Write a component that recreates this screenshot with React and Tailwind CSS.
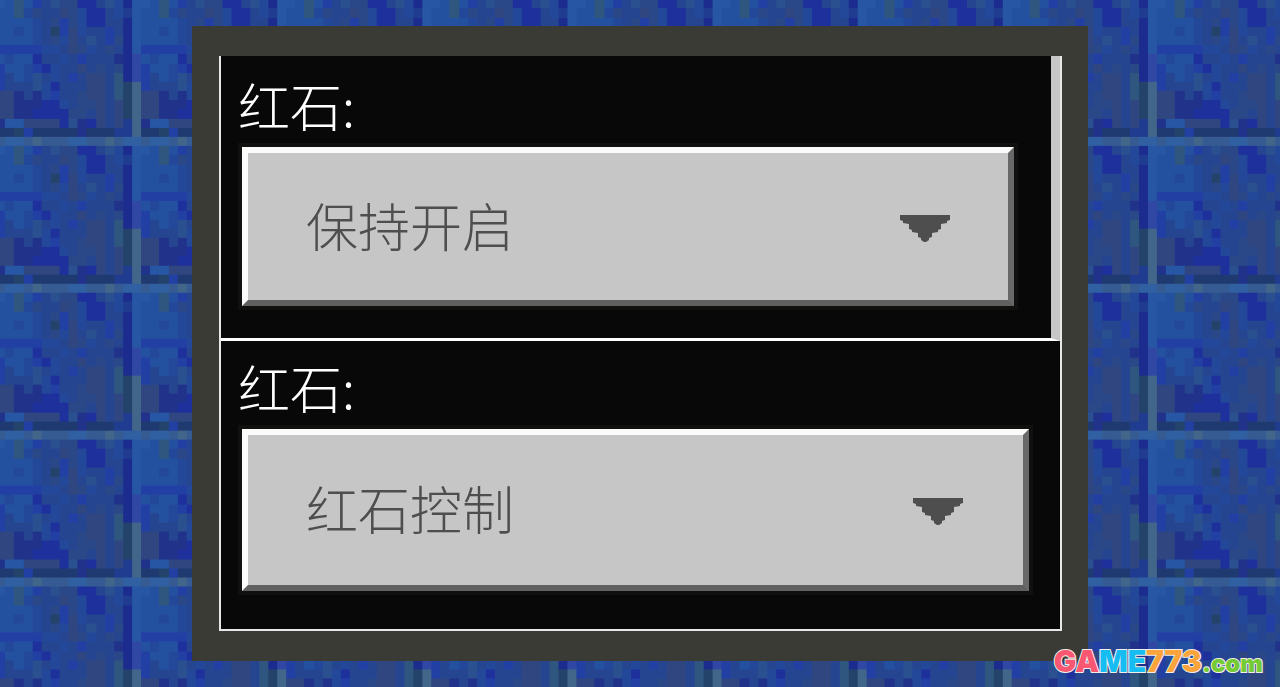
import { useState } from "react";

const COLORS = {
  a: "#2450a0", b: "#244899", c: "#264590", d: "#223fa4", e: "#1e309b",
  f: "#2a4788", g: "#2f4680", h: "#1f3a70", i: "#355b92", j: "#305fa2",
  k: "#2f567e", K: "#42658a", l: "#20328a", m: "#3048a4", n: "#1c2c8e",
  o: "#24436b", p: "#2a5090", q: "#2656a4", r: "#1f3c90",
};

const TILE = [
  "jijjiKiiijjiiKij",
  "qqakadcpffeecpbn",
  "qaakbfccgfbeecbr",
  "qaaaabcfdfbeeccn",
  "qaababcodgbccdcn",
  "qaaaabcfbgcpcdfn",
  "qdddddbbcgfbcfcn",
  "mabaaeccbcdcccln",
  "mdaabdebccgcfcfn",
  "mdcabpcbcdcggckn",
  "Kdcccpbecccggcko",
  "Kgglclbdccfggcko",
  "Kggllleebcffgcgo",
  "Kgglleeeeffcgcgo",
  "Klqqggggeplegcgr",
  "Khhodhhhhhlhhhrr",
];

const CELLS = TILE.flatMap((row, y) => [...row].map((code, x) => ({ code, x, y })));

function LapisWall() {
  return (
    <svg className="absolute inset-0 h-full w-full" aria-hidden="true" shapeRendering="crispEdges">
      <defs>
        <pattern id="lapis" width="16" height="16" patternUnits="userSpaceOnUse" patternTransform="translate(-13 -10) scale(9.07 9.18)">
          {CELLS.map(({ code, x, y }) => (
            <rect key={`${x}-${y}`} x={x} y={y} width="1.05" height="1.05" fill={COLORS[code]} />
          ))}
        </pattern>
      </defs>
      <rect width="100%" height="100%" fill="url(#lapis)" />
    </svg>
  );
}

function Arrow({ className }) {
  return (
    <svg viewBox="0 0 52 28" className={`pointer-events-none absolute h-7 w-[52px] ${className}`} aria-hidden="true">
      <path d="M1 0H51V5L48 6V8L42 9V14L39 15V17L33 18V22L30 23V25L27 27H25L22 25V23L19 22V18L13 17V15L10 14V9L4 8V6L1 5Z" fill="#4e4e4e" />
    </svg>
  );
}

function RedstoneField({ id, initial, options, selectClass, arrowClass }) {
  const [value, setValue] = useState(initial);
  return (
    <>
      <label htmlFor={id} className="block pb-3 text-[52px] leading-[60px] text-white">
        红石:
      </label>
      <div className="relative ml-1">
        <select
          id={id}
          value={value}
          onChange={(event) => setValue(event.target.value)}
          className={`block w-full appearance-none rounded-none border-[6px] border-t-[#fbfbfb] border-r-[#686868] border-b-[#606060] border-l-[#fbfbfb] bg-[#c6c6c6] pb-1 pl-[58px] text-[52px] text-[#4e4e4e] outline-4 outline-[#10100e] ${selectClass}`}
        >
          {options.map((option) => (
            <option key={option}>{option}</option>
          ))}
        </select>
        <Arrow className={arrowClass} />
      </div>
    </>
  );
}

export default function App() {
  const options = ["保持开启", "红石控制"];
  return (
    <main className="relative min-h-screen overflow-hidden bg-[#25428f] py-[26px] font-['Noto_Sans_CJK_SC',sans-serif] font-light">
      <LapisWall />
      <div className="relative mx-auto w-[70%] bg-[#3a3b35] pt-[30px] pr-[26px] pb-[30px] pl-[27px]">
        <div className="border-r-2 border-b-2 border-l-2 border-[#e8e8e8] bg-[#080808]">
          <section className="border-r-[9px] border-b-[3px] border-r-[#c6c6c6] border-b-white pt-[19px] pr-[37px] pb-8 pl-[17px]">
            <RedstoneField id="redstone-state" initial={options[0]} options={options} selectClass="h-[159px]" arrowClass="top-[68px] right-[63px]" />
          </section>
          <section className="pt-4 pr-[31px] pb-[38px] pl-[17px]">
            <RedstoneField id="redstone-mode" initial={options[1]} options={options} selectClass="h-[162px]" arrowClass="top-[69px] right-[65px]" />
          </section>
        </div>
      </div>
      <a
        href="#home"
        className="absolute right-[17px] bottom-[7px] flex items-baseline font-['Inter',sans-serif] text-[30px] leading-8 font-black [paint-order:stroke_fill] [-webkit-text-stroke:2px_#f4eeea]"
      >
        <span className="text-[#fa5872]">GA</span>
        <span className="text-[#16bdf2]">ME</span>
        <span className="text-[#faa43b]">773</span>
        <span className="text-2xl leading-8 text-[#74cb35]">.com</span>
      </a>
    </main>
  );
}
